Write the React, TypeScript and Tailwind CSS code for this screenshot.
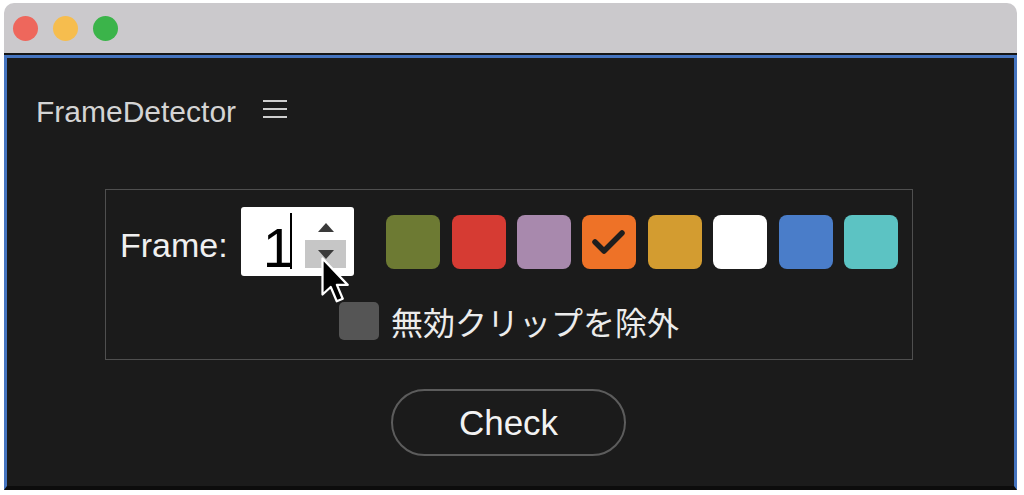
import React from 'react';

const swatches = ['#6d7a33', '#d63b33', '#a889ad', '#ee7227', '#d39c30', '#ffffff', '#4a7dc9', '#5cc3c3'];

export default function App() {
  return (
    <div className="w-[1024px] h-[495px] bg-white pt-[3px] pl-[4px] overflow-hidden" style={{ fontFamily: '"Liberation Sans", Arial, sans-serif' }}>
      <div className="w-[1013px] h-[487px] flex flex-col rounded-t-[10px] overflow-hidden">
        {/* title bar */}
        <div className="h-[50px] shrink-0 bg-[#cbc9cc] flex items-center gap-[15px] pl-[9px]">
          <span className="w-[25px] h-[25px] rounded-full bg-[#ee675c]" />
          <span className="w-[25px] h-[25px] rounded-full bg-[#f6bd4e]" />
          <span className="w-[25px] h-[25px] rounded-full bg-[#3bb44a]" />
        </div>
        <div className="h-[2px] shrink-0 bg-[#151515]" />

        {/* panel */}
        <div className="flex-1 flex flex-col bg-[#1b1b1b] border-t-[3px] border-x-[3px] border-[#4574bf] border-b-[4px] border-b-[#0c0c0c]">
          <div className="pl-[29px] pt-[39px] flex items-center">
            <span className="text-[30px] leading-none text-[#d4d4d4]">FrameDetector</span>
            <svg className="ml-[27px] mt-[-6px]" width="24" height="20" viewBox="0 0 24 20">
              <g stroke="#cfcfcf" strokeWidth="2.2">
                <line x1="0" y1="2" x2="24" y2="2" />
                <line x1="0" y1="10" x2="24" y2="10" />
                <line x1="0" y1="18" x2="24" y2="18" />
              </g>
            </svg>
          </div>

          <div className="ml-[98px] mt-[62px] w-[808px] border-[1.5px] border-[#4f4f4f] px-[14px] pt-[17px] pb-[19px]">
            <div className="flex items-center h-[69px]">
              <span className="text-[34px] leading-none text-[#f0f0f0] pt-[7px]">Frame:</span>
              <div className="relative ml-[13px] w-[113px] h-[69px] bg-white rounded-[3px]">
                <span className="absolute left-[22px] top-[13px] text-[56px] leading-none font-medium text-black">1</span>
                <span className="absolute left-[49px] top-[6px] w-[2px] h-[56px] bg-black" />
                <svg className="absolute left-[77px] top-[16px]" width="16" height="9" viewBox="0 0 16 9">
                  <polygon points="8,0 16,9 0,9" fill="#3a3a3a" />
                </svg>
                <div className="absolute left-[64px] top-[33px] w-[41px] h-[28px] bg-[#c6c6c6]" />
                <svg className="absolute left-[77px] top-[43px]" width="16" height="9" viewBox="0 0 16 9">
                  <polygon points="0,0 16,0 8,9" fill="#3a3a3a" />
                </svg>
                <svg className="absolute left-[80px] top-[50px]" width="33" height="51" viewBox="0 0 22 34">
                  <path d="M1 1 L1 25 L6.5 20 L10.5 29.5 L14.5 27.8 L10.6 18.6 L17.8 18.6 Z" fill="#000" stroke="#fff" strokeWidth="1.5" strokeLinejoin="round" />
                </svg>
              </div>
              <div className="ml-auto flex gap-[11.4px]">
                {swatches.map((c, i) => (
                  <div key={c} className="w-[54px] h-[54px] rounded-[8px] flex items-center justify-center" style={{ backgroundColor: c }}>
                    {i === 3 && (
                      <svg width="54" height="54" viewBox="0 0 54 54">
                        <polyline points="13,27 22,36 40,18" fill="none" stroke="#1e1e1e" strokeWidth="5.5" strokeLinecap="round" strokeLinejoin="round" />
                      </svg>
                    )}
                  </div>
                ))}
              </div>
            </div>
            <div className="mt-[26px] flex items-center justify-center gap-[12px]">
              <span className="w-[40px] h-[38px] rounded-[5px] bg-[#555555]" />
              <span className="text-[32px] leading-none text-[#ececec]" style={{ fontFamily: '"Noto Sans CJK JP", sans-serif' }}>
                無効クリップを除外
              </span>
            </div>
          </div>

          <button className="ml-[384px] mt-[29px] w-[235px] h-[67px] rounded-full border-2 border-[#5c5c5c] flex items-center justify-center">
            <span className="text-[35px] leading-none text-[#f2f2f2]">Check</span>
          </button>
        </div>
      </div>
    </div>
  );
}
